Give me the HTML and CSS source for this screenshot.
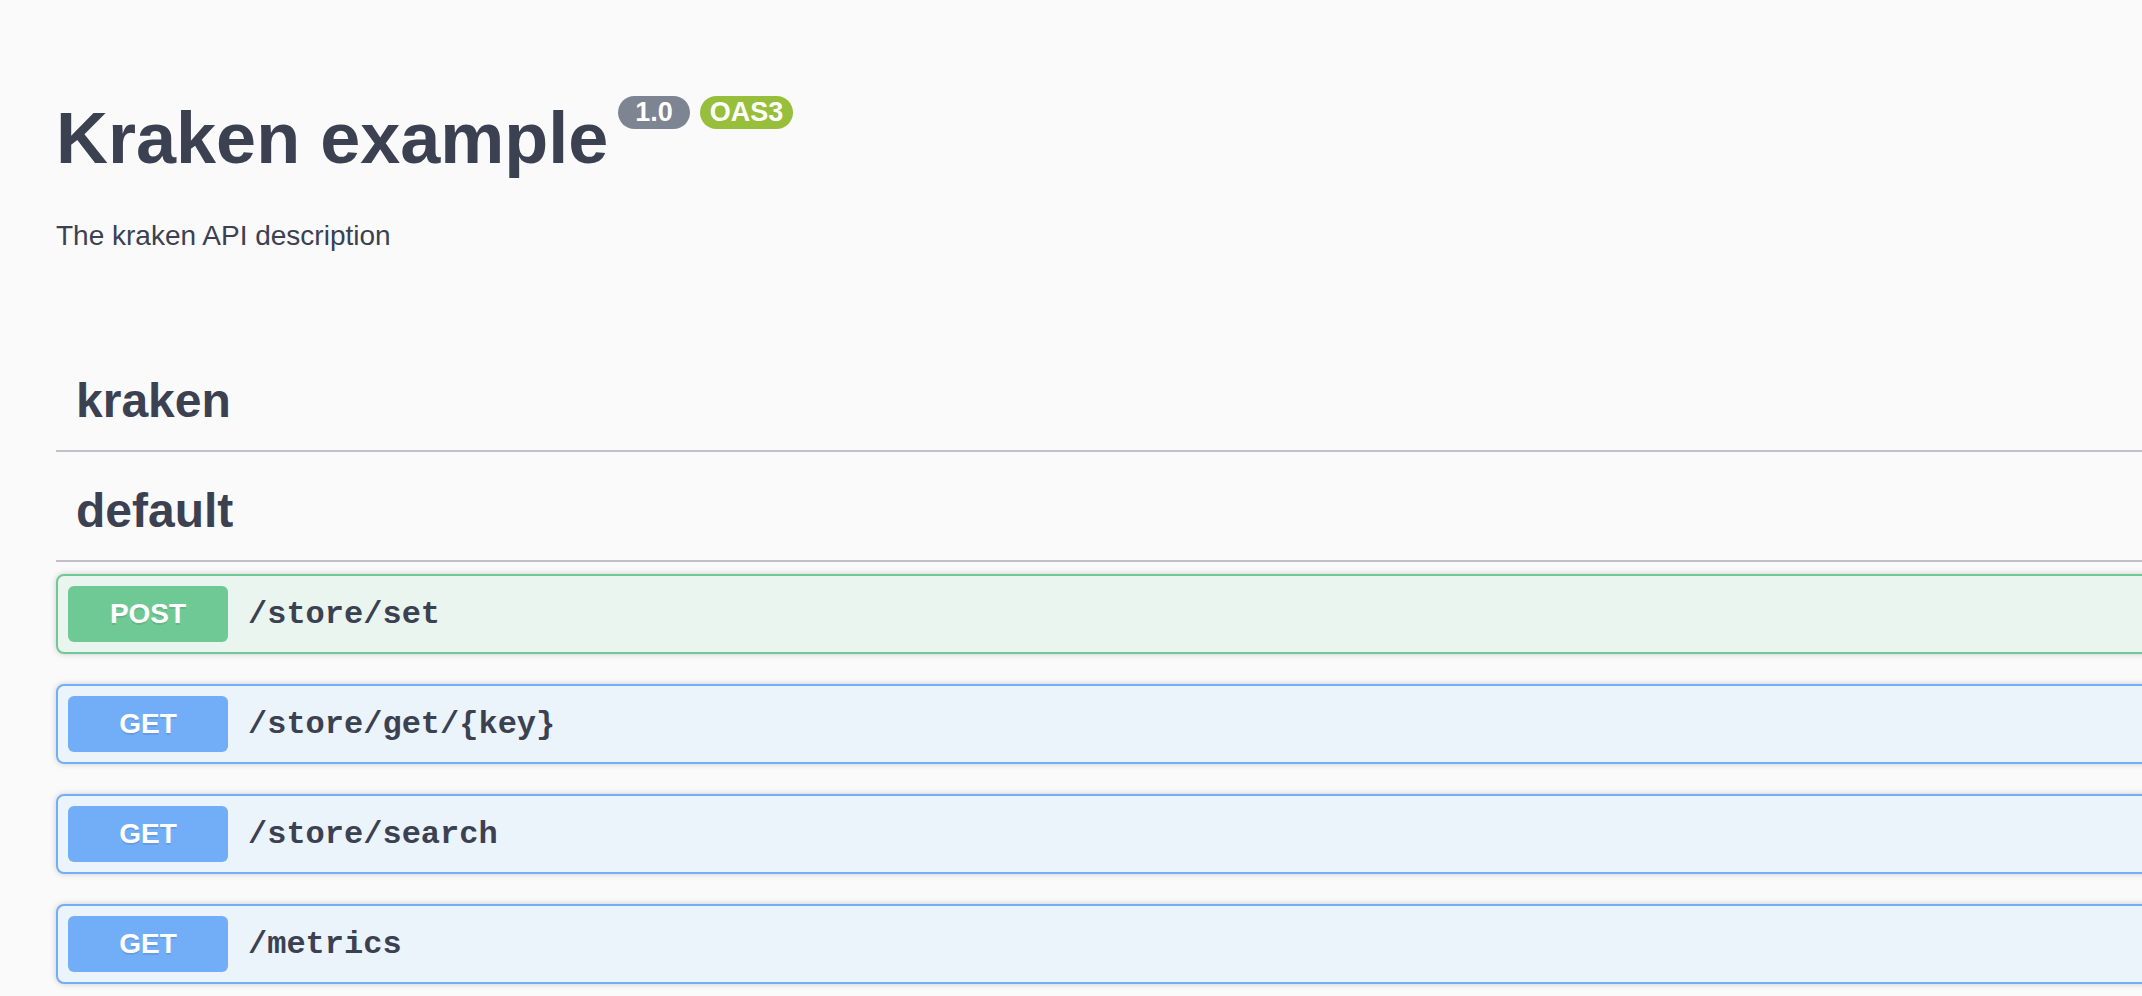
FILE: index.html
```html
<!DOCTYPE html>
<html lang="en">
<head>
<meta charset="utf-8">
<title>Kraken example</title>
<link rel="stylesheet" href="styles.css">
</head>
<body>
<div class="wrapper">
  <section class="info">
    <h2 class="title">
      <span class="title-text">Kraken example</span>
      <small class="badge badge-version">1.0</small>
      <small class="badge badge-oas">OAS3</small>
    </h2>
    <p class="description">The kraken API description</p>
  </section>

  <section class="tag-section">
    <h3 class="opblock-tag">kraken</h3>
  </section>

  <section class="tag-section">
    <h3 class="opblock-tag">default</h3>
    <div class="ops">
      <div class="opblock opblock-post">
        <span class="method method-post">POST</span>
        <span class="path">/store/set</span>
      </div>
      <div class="opblock opblock-get">
        <span class="method method-get">GET</span>
        <span class="path">/store/get/{key}</span>
      </div>
      <div class="opblock opblock-get">
        <span class="method method-get">GET</span>
        <span class="path">/store/search</span>
      </div>
      <div class="opblock opblock-get">
        <span class="method method-get">GET</span>
        <span class="path">/metrics</span>
      </div>
    </div>
  </section>
</div>
</body>
</html>
```

FILE: styles.css
```css
html, body {
  margin: 0;
  padding: 0;
  background: #fafafa;
}

body {
  overflow-x: hidden;
  font-family: "Liberation Sans", Arial, sans-serif;
  color: #3b4151;
}

.wrapper {
  padding-left: 56px;
  margin-right: -40px;
}

.info {
  padding-top: 96px;
  margin-bottom: 98px;
}

.title {
  display: flex;
  align-items: flex-start;
  margin: 0;
  font-weight: 700;
}

.title-text {
  font-size: 72px;
  line-height: 84px;
  color: #3b4151;
}

.badge {
  margin-top: 0;
  height: 33px;
  line-height: 33px;
  font-size: 27px;
  font-weight: 700;
  color: #fff;
  border-radius: 20px;
}

.badge-version {
  margin-left: 10px;
  padding: 0 17px;
  background: #7d8492;
}

.badge-oas {
  margin-left: 10px;
  padding: 0 10px;
  background: #97bf3b;
}

.description {
  margin: 38px 0 0;
  font-size: 28px;
  line-height: 36px;
}

.tag-section {
  display: flex;
  flex-direction: column;
}

.opblock-tag {
  margin: 0 0 10px;
  padding: 20px 40px 20px 20px;
  font-size: 48px;
  line-height: 58px;
  font-weight: 700;
  border-bottom: 2px solid rgba(59, 65, 81, 0.3);
}

.ops {
  padding-top: 2px;
}

.opblock {
  display: flex;
  align-items: center;
  margin: 0 0 30px;
  padding: 10px;
  border: 2px solid #000;
  border-radius: 8px;
  box-shadow: 0 0 6px rgba(0, 0, 0, 0.19);
}

.opblock-post {
  border-color: #6fc994;
  background: #eaf5ef;
}

.opblock-get {
  border-color: #72aef7;
  background: #ebf3fb;
}

.method {
  min-width: 160px;
  box-sizing: border-box;
  padding: 12px 30px;
  font-size: 28px;
  line-height: 32px;
  font-weight: 700;
  text-align: center;
  color: #fff;
  border-radius: 6px;
  text-shadow: 0 2px 0 rgba(0, 0, 0, 0.1);
}

.method-post {
  background: #6fc994;
}

.method-get {
  background: #72aef7;
}

.path {
  padding: 0 20px;
  font-family: "Liberation Mono", "Courier New", monospace;
  font-size: 32px;
  font-weight: 700;
  color: #3b4151;
}
```
